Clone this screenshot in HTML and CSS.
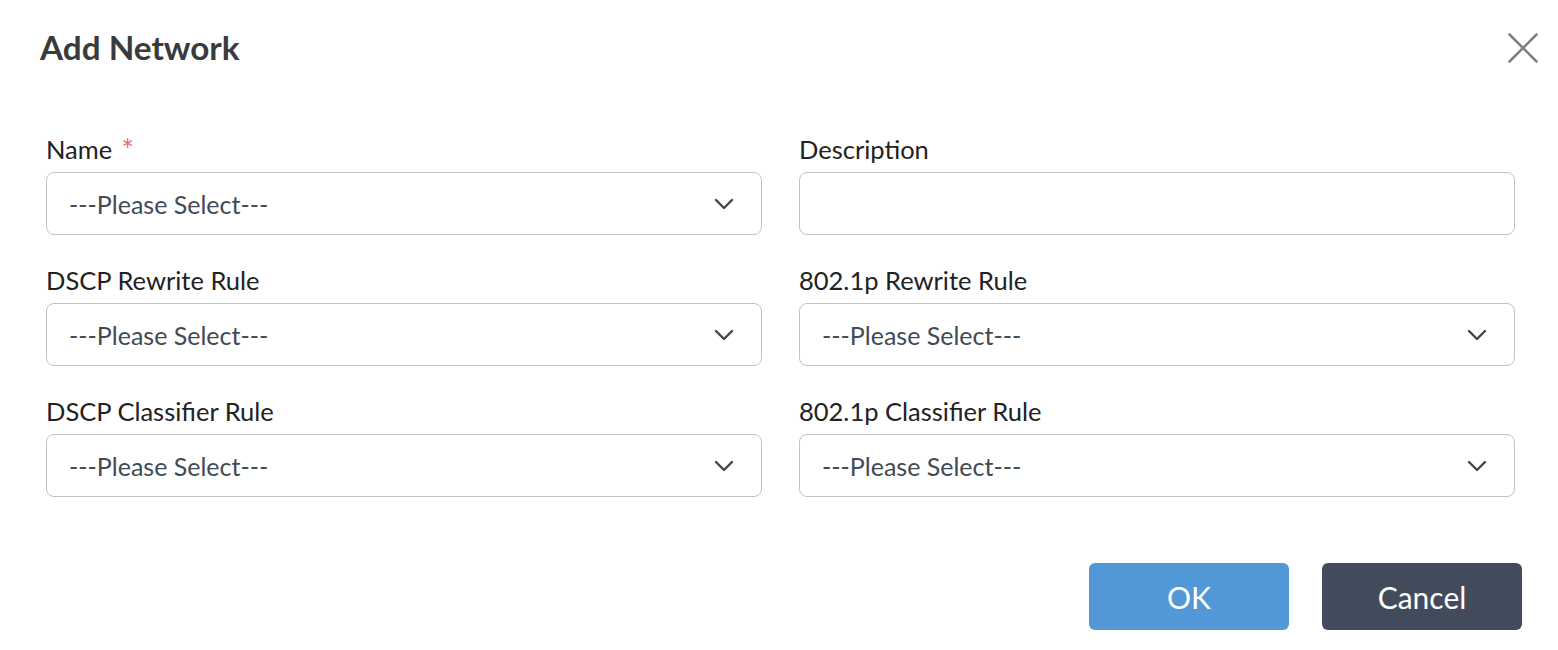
FILE: index.html
```html
<!DOCTYPE html>
<html lang="en">
<head>
<meta charset="utf-8">
<title>Add Network</title>
<link rel="stylesheet" href="styles.css">
</head>
<body>
<div class="dialog">
  <div class="header">
    <h1 class="title">Add Network</h1>
    <button class="close" aria-label="Close">
      <svg width="32" height="32" viewBox="0 0 32 32"><path d="M2.5 2.5 L29.5 29.5 M29.5 2.5 L2.5 29.5" stroke="#808080" stroke-width="2.6" stroke-linecap="round" fill="none"/></svg>
    </button>
  </div>
  <form class="form">
    <div class="field">
      <label class="label">Name<span class="req">*</span></label>
      <div class="select"><span class="value">---Please Select---</span><svg class="chev" width="20" height="12" viewBox="0 0 20 12"><path d="M2 2 L10 10 L18 2" stroke="#3e4651" stroke-width="2.4" fill="none" stroke-linecap="round" stroke-linejoin="round"/></svg></div>
    </div>
    <div class="field">
      <label class="label">Description</label>
      <div class="input"></div>
    </div>
    <div class="field">
      <label class="label">DSCP Rewrite Rule</label>
      <div class="select"><span class="value">---Please Select---</span><svg class="chev" width="20" height="12" viewBox="0 0 20 12"><path d="M2 2 L10 10 L18 2" stroke="#3e4651" stroke-width="2.4" fill="none" stroke-linecap="round" stroke-linejoin="round"/></svg></div>
    </div>
    <div class="field">
      <label class="label">802.1p Rewrite Rule</label>
      <div class="select"><span class="value">---Please Select---</span><svg class="chev" width="20" height="12" viewBox="0 0 20 12"><path d="M2 2 L10 10 L18 2" stroke="#3e4651" stroke-width="2.4" fill="none" stroke-linecap="round" stroke-linejoin="round"/></svg></div>
    </div>
    <div class="field">
      <label class="label">DSCP Classifier Rule</label>
      <div class="select"><span class="value">---Please Select---</span><svg class="chev" width="20" height="12" viewBox="0 0 20 12"><path d="M2 2 L10 10 L18 2" stroke="#3e4651" stroke-width="2.4" fill="none" stroke-linecap="round" stroke-linejoin="round"/></svg></div>
    </div>
    <div class="field">
      <label class="label">802.1p Classifier Rule</label>
      <div class="select"><span class="value">---Please Select---</span><svg class="chev" width="20" height="12" viewBox="0 0 20 12"><path d="M2 2 L10 10 L18 2" stroke="#3e4651" stroke-width="2.4" fill="none" stroke-linecap="round" stroke-linejoin="round"/></svg></div>
    </div>
  </form>
  <div class="footer">
    <button class="btn btn-ok">OK</button>
    <button class="btn btn-cancel">Cancel</button>
  </div>
</div>
</body>
</html>
```
FILE: styles.css
```css
* { box-sizing: border-box; }
html, body { margin: 0; padding: 0; background: #fff; }
body { font-family: Lato, "Noto Sans", sans-serif; }
.dialog { width: 1558px; height: 650px; }
.header {
  display: flex; align-items: center; justify-content: space-between;
  height: 96px; padding: 0 19px 0 40px;
}
.title { margin: 0; font-size: 33.3px; font-weight: 700; color: #3b3b3b; line-height: 1.2; }
.close { border: 0; background: none; padding: 0; width: 32px; height: 32px; display: flex; cursor: pointer; }
.form {
  display: grid; grid-template-columns: 716px 716px; column-gap: 37px; row-gap: 31px;
  padding: 39px 0 0 46px;
}
.field { display: flex; flex-direction: column; }
.label { font-size: 25.5px; line-height: 28px; height: 28px; color: #222; margin-bottom: 9px; }
.req { color: #e0707a; font-size: 30px; line-height: 0; margin-left: 9px; position: relative; top: 2px; }
.select, .input {
  height: 63px; border: 1px solid #c2c2c2; border-radius: 8px; background: #fff;
  display: flex; align-items: center; justify-content: space-between;
  padding: 0 27px 0 22px;
}
.value { font-size: 25px; color: #414a55; }
.chev { display: block; }
.footer { display: flex; justify-content: flex-end; gap: 33px; padding: 66px 36px 0 0; }
.btn {
  width: 200px; height: 67px; border: 0; border-radius: 6px;
  font-family: Lato, "Noto Sans", sans-serif; font-size: 30px; color: #fff; cursor: pointer;
}
.btn-ok { background: #5297d6; }
.btn-cancel { background: #424b5c; }
```
